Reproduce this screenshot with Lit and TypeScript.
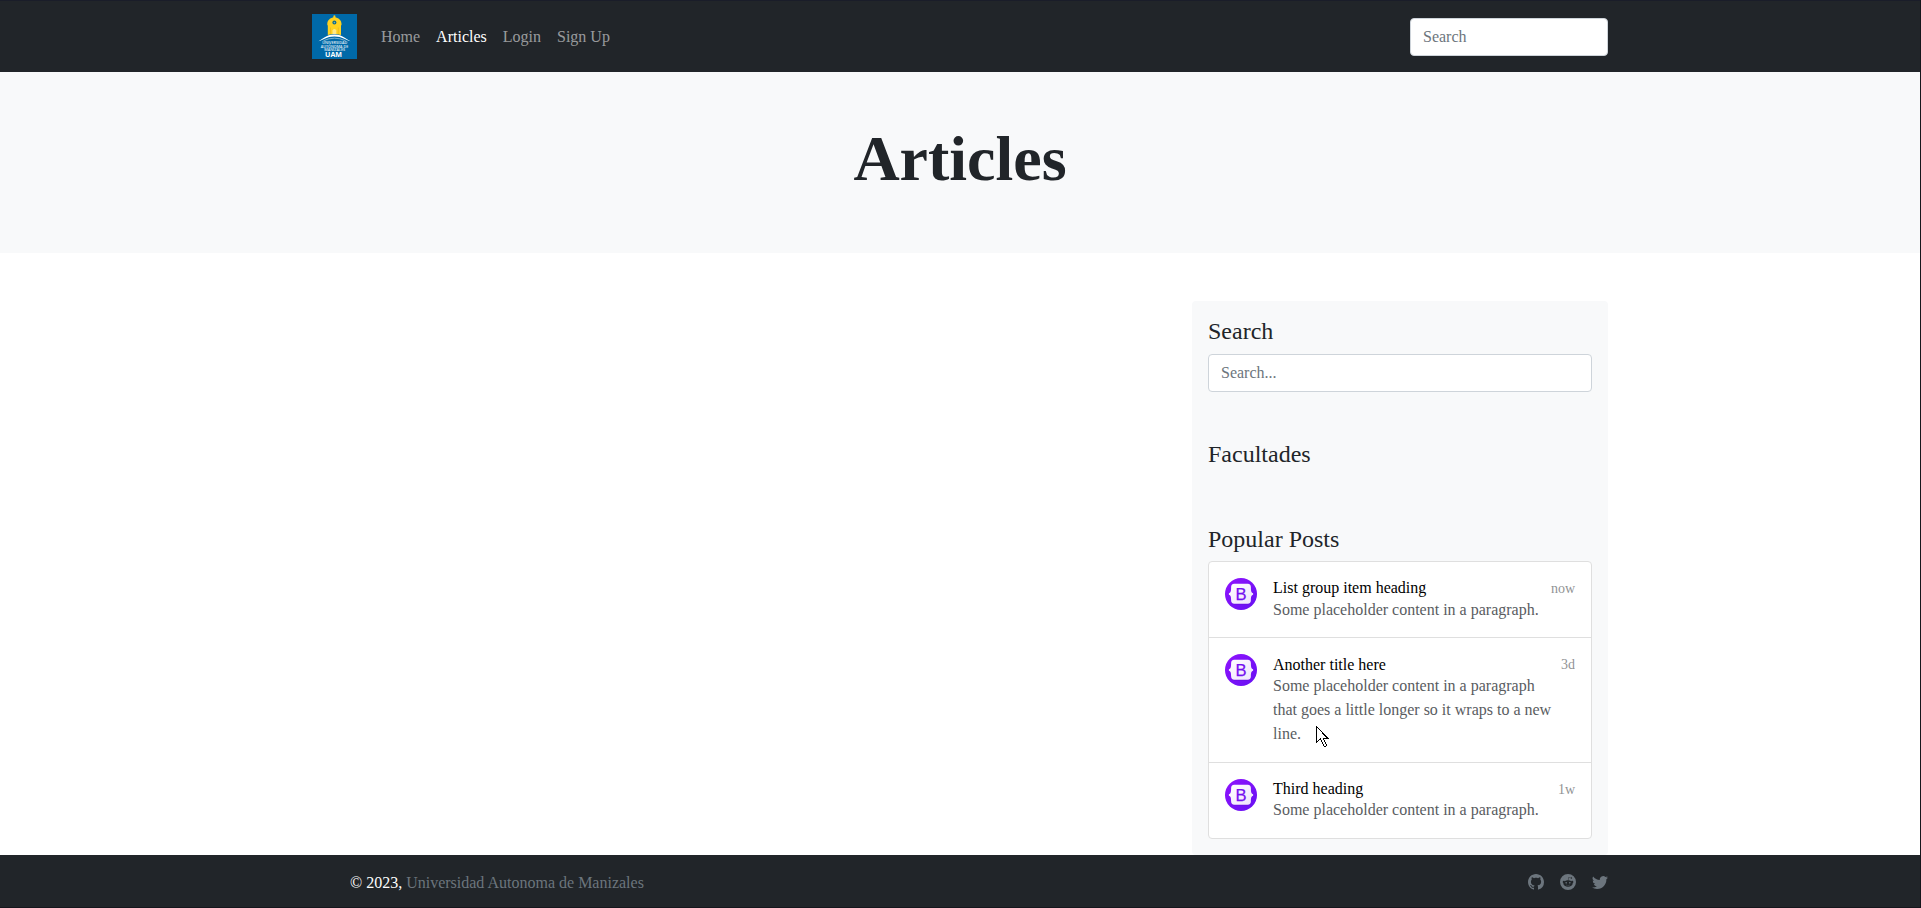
import { LitElement, html, css, svg } from "lit";
import { customElement, property } from "lit/decorators.js";

interface Post {
  title: string;
  text: string;
  age: string;
}

const NAV = ["Home", "Articles", "Login", "Sign Up"];

const POSTS: Post[] = [
  { title: "List group item heading", text: "Some placeholder content in a paragraph.", age: "now" },
  { title: "Another title here", text: "Some placeholder content in a paragraph that goes a little longer so it wraps to a new line.", age: "3d" },
  { title: "Third heading", text: "Some placeholder content in a paragraph.", age: "1w" },
];

const SOCIAL = [
  svg`<path d="M8 0C3.58 0 0 3.58 0 8c0 3.54 2.29 6.53 5.47 7.59.4.07.55-.17.55-.38 0-.19-.01-.82-.01-1.49-2.01.37-2.53-.49-2.69-.94-.09-.23-.48-.94-.82-1.13-.28-.15-.68-.52-.01-.53.63-.01 1.08.58 1.23.82.72 1.21 1.87.87 2.33.66.07-.52.28-.87.51-1.07-1.78-.2-3.64-.89-3.64-3.95 0-.87.31-1.59.82-2.15-.08-.2-.36-1.02.08-2.12 0 0 .67-.21 2.2.82.64-.18 1.32-.27 2-.27.68 0 1.36.09 2 .27 1.53-1.04 2.2-.82 2.2-.82.44 1.1.16 1.92.08 2.12.51.56.82 1.27.82 2.15 0 3.07-1.87 3.75-3.65 3.95.29.25.54.73.54 1.48 0 1.07-.01 1.93-.01 2.2 0 .21.15.46.55.38A8.012 8.012 0 0 0 16 8c0-4.42-3.58-8-8-8z"/>`,
  svg`<path d="M6.167 8a.831.831 0 0 0-.83.83c0 .459.372.84.83.831a.831.831 0 0 0 0-1.661zm1.843 3.647c.315 0 1.403-.038 1.976-.611a.232.232 0 0 0 0-.306.213.213 0 0 0-.306 0c-.353.363-1.126.487-1.67.487-.545 0-1.308-.124-1.671-.487a.213.213 0 0 0-.306 0 .213.213 0 0 0 0 .306c.564.563 1.652.61 1.977.61zm.992-2.807c0 .458.373.83.831.83.458 0 .83-.381.83-.83a.831.831 0 0 0-1.66 0z"/><path d="M16 8A8 8 0 1 1 0 8a8 8 0 0 1 16 0zm-3.828-1.165c-.315 0-.602.124-.812.325-.801-.573-1.9-.945-3.121-.993l.534-2.501 1.738.372a.83.83 0 1 0 .83-.869.83.83 0 0 0-.744.468l-1.938-.41a.203.203 0 0 0-.153.028.186.186 0 0 0-.086.134l-.592 2.788c-1.24.038-2.358.41-3.17.992-.21-.2-.496-.324-.81-.324a1.163 1.163 0 0 0-.478 2.224c-.02.115-.029.23-.029.353 0 1.795 2.091 3.256 4.669 3.256 2.577 0 4.668-1.451 4.668-3.256 0-.114-.01-.238-.029-.353.401-.181.688-.592.688-1.069 0-.65-.525-1.165-1.173-1.165z"/>`,
  svg`<path d="M5.026 15c6.038 0 9.341-5.003 9.341-9.334 0-.14 0-.282-.006-.422A6.685 6.685 0 0 0 16 3.542a6.658 6.658 0 0 1-1.889.518 3.301 3.301 0 0 0 1.447-1.817 6.533 6.533 0 0 1-2.087.793A3.286 3.286 0 0 0 7.875 6.03a9.325 9.325 0 0 1-6.767-3.429 3.289 3.289 0 0 0 1.018 4.382A3.323 3.323 0 0 1 .64 6.575v.045a3.288 3.288 0 0 0 2.632 3.218 3.203 3.203 0 0 1-.865.115 3.23 3.23 0 0 1-.614-.057 3.283 3.283 0 0 0 3.067 2.277A6.588 6.588 0 0 1 .78 13.58a6.32 6.32 0 0 1-.78-.045A9.344 9.344 0 0 0 5.026 15z"/>`,
];

const inputStyles = css`
  input {
    display: block;
    box-sizing: border-box;
    width: 100%;
    height: 38px;
    margin: 0;
    padding: 6px 12px;
    border: 1px solid #ced4da;
    border-radius: 4px;
    background: #fff;
    color: #212529;
    font: 16px/24px "Liberation Serif", "Times New Roman", serif;
  }
  input::placeholder {
    color: #6c757d;
    opacity: 1;
  }
`;

@customElement("uam-logo")
class UamLogo extends LitElement {
  static styles = css`
    :host { display: block; width: 45px; height: 45px; }
    svg { display: block; }
    text { font-family: "Open Sans", sans-serif; fill: #fff; text-anchor: middle; }
    .small { font-size: 3.6px; font-weight: 600; fill: #e2eff7; }
    .big { font-size: 7.4px; font-weight: 700; }
  `;

  render() {
    return html`<svg width="45" height="45" viewBox="0 0 45 45">
      <rect width="45" height="45" fill="#0069a8" />
      <path fill="#ffd21f" d="M21.4 3.2V1.7Q22.4.6 23.4 1.700v1.500C27 4 29.500 6.600 29.500 9.800v1.400h-.5v9.800q-6.600-2-13.200 0v-9.800h-.5V9.800C15.300 6.600 17.800 4 21.400 3.200z" />
      <circle cx="22.4" cy="8.600" r="2" fill="#0f6a8c" />
      <circle cx="22.4" cy="8.600" r=".8" fill="#7eb4a0" />
      <path fill="#f0bb20" d="M18 13.500h1v6.300h-1zM25.800 13.500h1v6.300h-1z" />
      <path fill="#ffe98a" d="M20.500 20v-3.600q1.900-2.600 3.800 0V20z" />
      <path fill="#fff" d="M6.500 27.200C11 25.500 13.500 20.600 22.400 20.600S33.500 25.500 38.500 27.200C33.500 26.400 30.500 22.600 22.400 22.600S11.500 26.400 6.500 27.200z" />
      <path fill="none" stroke="#a9cde2" stroke-width=".7" d="M11.500 26.700Q22.400 21.700 33.500 26.700" />
      <text class="small" x="22.700" y="30.200" textLength="25" lengthAdjust="spacingAndGlyphs">UNIVERSIDAD</text>
      <text class="small" x="22.500" y="33.700" textLength="27.500" lengthAdjust="spacingAndGlyphs">AUTÓNOMA DE</text>
      <text class="small" x="22.700" y="37.200" textLength="21" lengthAdjust="spacingAndGlyphs">MANIZALES</text>
      <text class="big" x="21.500" y="43.100" textLength="17" lengthAdjust="spacingAndGlyphs">UAM</text>
    </svg>`;
  }
}

@customElement("bootstrap-avatar")
class BootstrapAvatar extends LitElement {
  static styles = css`
    :host { display: block; flex: none; width: 32px; height: 32px; }
    svg { display: block; }
    text { font: 16.6px "Liberation Sans", Arial, sans-serif; fill: #7410f0; stroke: #7410f0; stroke-width: 0.25px; text-anchor: middle; }
  `;

  render() {
    return html`<svg width="32" height="32" viewBox="0 0 32 32">
      <defs>
        <linearGradient id="ring" x1="0" y1="0" x2="1" y2="1">
          <stop offset="0" stop-color="#9013fe" />
          <stop offset="1" stop-color="#6610f2" />
        </linearGradient>
        <linearGradient id="plate" x1="0" y1="0" x2="1" y2="1">
          <stop offset="0" stop-color="#fff" />
          <stop offset="1" stop-color="#eee2fd" />
        </linearGradient>
      </defs>
      <circle cx="16" cy="16" r="16" fill="url(#ring)" />
      <path fill="#5b0cc4" opacity=".3" d="M9.500 6.600h13q3.500 0 3.500 4v12q0 4.200-3.500 4.200h-13Q6 26.800 6 22.600v-12q0-4 3.500-4z" />
      <path fill="url(#plate)" d="M9.300 5.800h13.400c2.200 0 3.200 1.500 3.200 3.500 0 2.600.1 5.700 2.200 6v1.400c-2.100.3-2.200 3-2.200 5.600 0 2-1 3.500-3.200 3.500H9.300c-2.200 0-3.200-1.500-3.200-3.500 0-2.600-.1-5.300-2.200-5.600v-1.400c2.100-.3 2.200-3.400 2.200-6 0-2 1-3.500 3.200-3.500z" />
      <text x="16" y="22">B</text>
    </svg>`;
  }
}

@customElement("site-nav")
class SiteNav extends LitElement {
  @property() active = "Articles";

  static styles = [inputStyles, css`
    :host { display: block; background: #212529; border-top: 1px solid #1a1d29; }
    .container { display: flex; align-items: center; box-sizing: border-box; width: 1296px; height: 71px; margin: 0 auto; }
    nav { display: flex; gap: 16px; margin-left: 24px; flex: 1; }
    a { color: rgba(255, 255, 255, 0.55); text-decoration: none; line-height: 24px; }
    a.active { color: #fff; }
    .search { width: 198px; padding-top: 1px; }
  `];

  render() {
    return html`<div class="container">
      <uam-logo></uam-logo>
      <nav>${NAV.map((n) => html`<a class=${n === this.active ? "active" : ""}>${n}</a>`)}</nav>
      <div class="search"><input placeholder="Search" aria-label="Search" /></div>
    </div>`;
  }
}

@customElement("post-list")
class PostList extends LitElement {
  static styles = css`
    :host { display: block; border: 1px solid #dfdfdf; border-radius: 4px; background: #fff; }
    .item { display: flex; gap: 16px; padding: 16px; }
    .item + .item { border-top: 1px solid #dfdfdf; }
    .body { display: flex; flex: 1; justify-content: space-between; gap: 8px; }
    .copy { padding-top: 0.3px; margin-bottom: -0.3px; }
    h6 { margin: 0; font-size: 16px; font-weight: 400; line-height: 19.2px; color: #000; }
    p { margin: 0; line-height: 24px; color: #212529; opacity: 0.75; }
    small { font-size: 14px; line-height: 21px; color: #212529; opacity: 0.5; white-space: nowrap; }
  `;

  render() {
    return POSTS.map((p) => html`<div class="item">
      <bootstrap-avatar></bootstrap-avatar>
      <div class="body">
        <div class="copy"><h6>${p.title}</h6><p>${p.text}</p></div>
        <small>${p.age}</small>
      </div>
    </div>`);
  }
}

@customElement("site-footer")
class SiteFooter extends LitElement {
  static styles = css`
    :host { display: block; background: #212529; border-bottom: 1px solid #15161c; }
    .container { display: flex; justify-content: space-between; box-sizing: border-box; width: 1296px; height: 52px; margin: 0 auto; padding: 16px 0 0 38px; line-height: 24px; color: #fff; }
    .muted { color: #6c757d; }
    .social { display: flex; gap: 16px; padding-top: 3px; color: #6c757d; }
    svg { display: block; }
  `;

  render() {
    return html`<div class="container">
      <div>© 2023, <span class="muted">Universidad Autonoma de Manizales</span></div>
      <div class="social">
        ${SOCIAL.map((s) => html`<svg width="16" height="16" viewBox="0 0 16 16" fill="currentColor">${s}</svg>`)}
      </div>
    </div>`;
  }
}

@customElement("app-root")
class AppRoot extends LitElement {
  static styles = [inputStyles, css`
    :host {
      display: flex;
      flex-direction: column;
      box-sizing: border-box;
      height: 908px;
      overflow: hidden;
      position: relative;
      border-right: 1px solid #15161c;
      background: #fff;
      color: #212529;
      font: 16px/24px "Liberation Serif", "Times New Roman", serif;
    }
    .hero { padding: 49px 0 55px; background: #f8f9fa; text-align: center; }
    h1 { margin: 0; font-size: 64px; line-height: 76.8px; font-weight: 700; }
    main { display: flex; justify-content: flex-end; flex: 1; width: 1296px; margin: 0 auto; padding-top: 48px; }
    aside { display: flex; flex-direction: column; gap: 48px; box-sizing: border-box; width: 416px; padding: 16px; border-radius: 4px; background: #f8f9fa; }
    h4 { margin: 0; padding: 0.3px 0 7.7px; font-size: 24px; line-height: 28.8px; font-weight: 400; }
    .pointer { position: absolute; left: 1316px; top: 726px; }
  `];

  render() {
    return html`
      <site-nav></site-nav>
      <div class="hero"><h1>Articles</h1></div>
      <main>
        <aside>
          <section><h4>Search</h4><input placeholder="Search..." aria-label="Search articles" /></section>
          <section><h4>Facultades</h4></section>
          <section><h4>Popular Posts</h4><post-list></post-list></section>
        </aside>
      </main>
      <site-footer></site-footer>
      <svg class="pointer" width="13" height="21" viewBox="0 0 13 21" shape-rendering="crispEdges">
        <path fill="#fff" stroke="#000" d="M.5.500v16l4-4 3 7q1.500 1.500 3 0l-3-7h4.500z" />
      </svg>
    `;
  }
}
